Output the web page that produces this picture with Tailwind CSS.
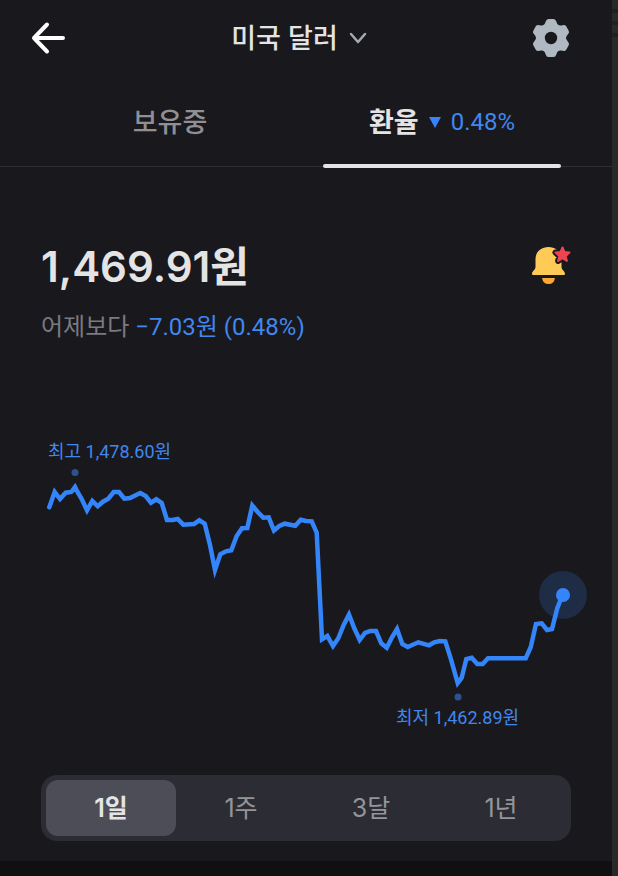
<!DOCTYPE html>
<html lang="ko">
<head>
  <meta charset="UTF-8">
  <meta name="viewport" content="width=device-width, initial-scale=1.0">
  <title>미국 달러 환율</title>
  <script src="https://cdn.jsdelivr.net/npm/@tailwindcss/browser@4"></script>
</head>
<body class="flex min-h-screen bg-[#292929] font-['Inter','Noto_Sans_CJK_KR',sans-serif] text-[#e4e4e5]">
  <div class="flex flex-1 flex-col bg-[#19181d]">
    <header class="grid h-[76px] grid-cols-[1fr_auto_1fr] items-center pr-[41px] pl-7">
      <button class="justify-self-start" aria-label="뒤로">
        <svg class="h-10 w-10" viewBox="0 0 40 40" fill="none" stroke="#fff" stroke-width="4" stroke-linecap="round" stroke-linejoin="round">
          <path d="M35 20H6M19 6.500 6 20l13 13.500"/>
        </svg>
      </button>
      <button class="flex items-center gap-2.5 pt-0.5 text-[27px] leading-9 font-medium">
        미국 달러
        <svg class="h-5 w-5" viewBox="0 0 20 20" fill="none" stroke="#a4a9b3" stroke-width="2.500" stroke-linecap="round" stroke-linejoin="round"><path d="m3 5 7 8 7-8"/></svg>
      </button>
      <button class="justify-self-end" aria-label="설정">
        <svg class="h-10 w-10" viewBox="-20 -20 40 40" fill="#b0b8c1">
          <defs><path id="tooth" d="M0 0-8-12.500Q-6-13.500-5.300-16.500-4.600-19-2.500-19H2.500Q4.600-19 5.300-16.500 6-13.500 8-12.500Z"/></defs>
          <circle r="14"/>
          <use href="#tooth"/>
          <use href="#tooth" transform="rotate(60)"/>
          <use href="#tooth" transform="rotate(120)"/>
          <use href="#tooth" transform="rotate(180)"/>
          <use href="#tooth" transform="rotate(240)"/>
          <use href="#tooth" transform="rotate(300)"/>
          <circle r="6.200" fill="#19181d"/>
        </svg>
      </button>
    </header>

    <nav class="grid h-[91px] grid-cols-2 gap-[34px] border-b border-[#2f2e33] px-[51px]">
      <a href="#" class="flex items-center justify-center pt-1 text-[27px] font-medium text-[#8f8f94]">보유중</a>
      <a href="#" class="relative flex items-center justify-center gap-2.5 pt-0.5">
        <span class="pt-0.5 text-[27px] font-bold">환율</span>
        <svg class="h-3 w-3" viewBox="0 0 12 12" fill="#3485fa"><path d="M0 1h12L6 12Z"/></svg>
        <span class="font-[Roboto] text-2xl text-[#4087ee]">0.48%</span>
        <span class="absolute inset-x-0 -bottom-0.5 h-1 rounded-full bg-[#e4e4e5]"></span>
      </a>
    </nav>

    <main class="flex flex-col">
      <section class="flex items-start justify-between px-[41px] pt-[72px]">
        <div>
          <h1 class="text-[42px] leading-[56px] font-semibold">1,469.91원</h1>
          <p class="mt-3.5 font-[Roboto,'Noto_Sans_CJK_KR',sans-serif] text-2xl leading-9 text-[#7b7a80]">어제보다 <span class="text-[#4087ee]">−7.03원 (0.48%)</span></p>
        </div>
        <button class="mt-1.5" aria-label="환율 알림">
          <svg class="h-10 w-[42px]" viewBox="0 0 42 40">
            <path d="M19.500 2C12 2 6.500 7 6.500 14v8c0 3-3.500 4-3.500 7q0 1 1 1h31q1 0 1-1c0-3-3.500-4-3.500-7v-8C32.500 7 27 2 19.500 2Z" fill="#ffcb56"/>
            <path d="M13 33h13q-1 6-6.500 6T13 33Z" fill="#ffa733"/>
            <path d="m33.500 2.500 2 4.500 5 .5-3.800 3.400 1.200 5-4.400-2.700-4.400 2.700 1.200-5-3.800-3.400 5-.5Z" fill="#f04452" stroke="#19181d" stroke-width="6" stroke-linejoin="round"/>
            <path d="m33.500 2.500 2 4.500 5 .5-3.800 3.400 1.200 5-4.400-2.700-4.400 2.700 1.200-5-3.800-3.400 5-.5Z" fill="#f04452" stroke="#f04452" stroke-width="2" stroke-linejoin="round"/>
          </svg>
        </button>
      </section>

      <svg class="mt-[85px] w-full font-[Roboto,'Noto_Sans_CJK_KR',sans-serif]" viewBox="0 430 612 320" role="img" aria-label="1일 환율 차트">
        <text x="48" y="458" font-size="18" fill="#4087ee">최고 1,478.60원</text>
        <circle cx="75" cy="472.500" r="3.500" fill="#2b5391"/>
        <circle cx="563" cy="595" r="24" fill="#1e2c46"/>
        <polyline fill="none" stroke="#3485fa" stroke-width="4.500" stroke-linecap="round" stroke-miterlimit="10" points="49.300,507.300 54.700,492 60,499 65.700,492.700 71.300,492 75,487 77.500,492 81.700,499 87,510.300 92.300,501 97.700,506.300 103,501.700 108.300,498.700 113.700,492 119,492 124.300,498.700 130,498 140.300,493 145.700,496 151,502.700 156.300,499.300 161.700,503 167,520 172.700,520 177.700,519 183.300,524.700 194,524 199.300,520.300 204.700,523.700 210,545 215,570 220.300,554.300 226,551.300 231.300,550.300 236.700,536 242,528.300 247.300,528 252.300,505.500 257.700,512 263.300,517.700 268.700,517.300 274,530.500 279.300,526 284.700,523.700 295.300,525.700 300.700,519.700 306,521 311.700,521.300 316.700,532.700 322,639.300 327.300,636 333,646 338.300,638.300 343.700,625 349,614.500 354.300,628.300 359.700,640 365,633 370.300,631 376,631 381.300,643.300 386.700,647.700 392,637.300 397,629 402.300,644 407.700,647 418.300,642.300 429,645.300 434.300,642.300 439.700,641 445.300,641.300 450.700,658.300 457.700,683 461.700,677.700 466.300,659 471.700,657.700 477.300,664 482.700,664 488,658.300 525.700,658.300 530.700,647.300 536,624 541.700,623.300 547,630 552,629 557.300,608.300 562.500,595"/>
        <circle cx="563" cy="595" r="7" fill="#3485fa"/>
        <circle cx="458" cy="697" r="3.500" fill="#2b5391"/>
        <text x="396" y="724" font-size="18" fill="#4087ee">최저 1,462.89원</text>
      </svg>

      <div class="mx-[41px] mt-[25px] mb-5 grid h-[66px] grid-cols-4 rounded-2xl bg-[#2c2c34] p-[5px] text-[25px] text-[#94949b]">
        <button class="rounded-xl bg-[#4d4d58] pt-0.5 font-semibold text-[#e4e4e5]">1일</button>
        <button class="pt-0.5">1주</button>
        <button class="pt-0.5">3달</button>
        <button class="pt-0.5">1년</button>
      </div>
    </main>
    <footer class="flex-1 bg-[#101012]"></footer>
  </div>

  <!-- edge of the page behind the panel -->
  <div class="flex w-1.5 flex-col gap-2 pt-[9px]">
    <div class="h-1 bg-[#202020]"></div>
    <div class="h-1 bg-[#202020]"></div>
    <div class="h-1 bg-[#202020]"></div>
  </div>
</body>
</html>
